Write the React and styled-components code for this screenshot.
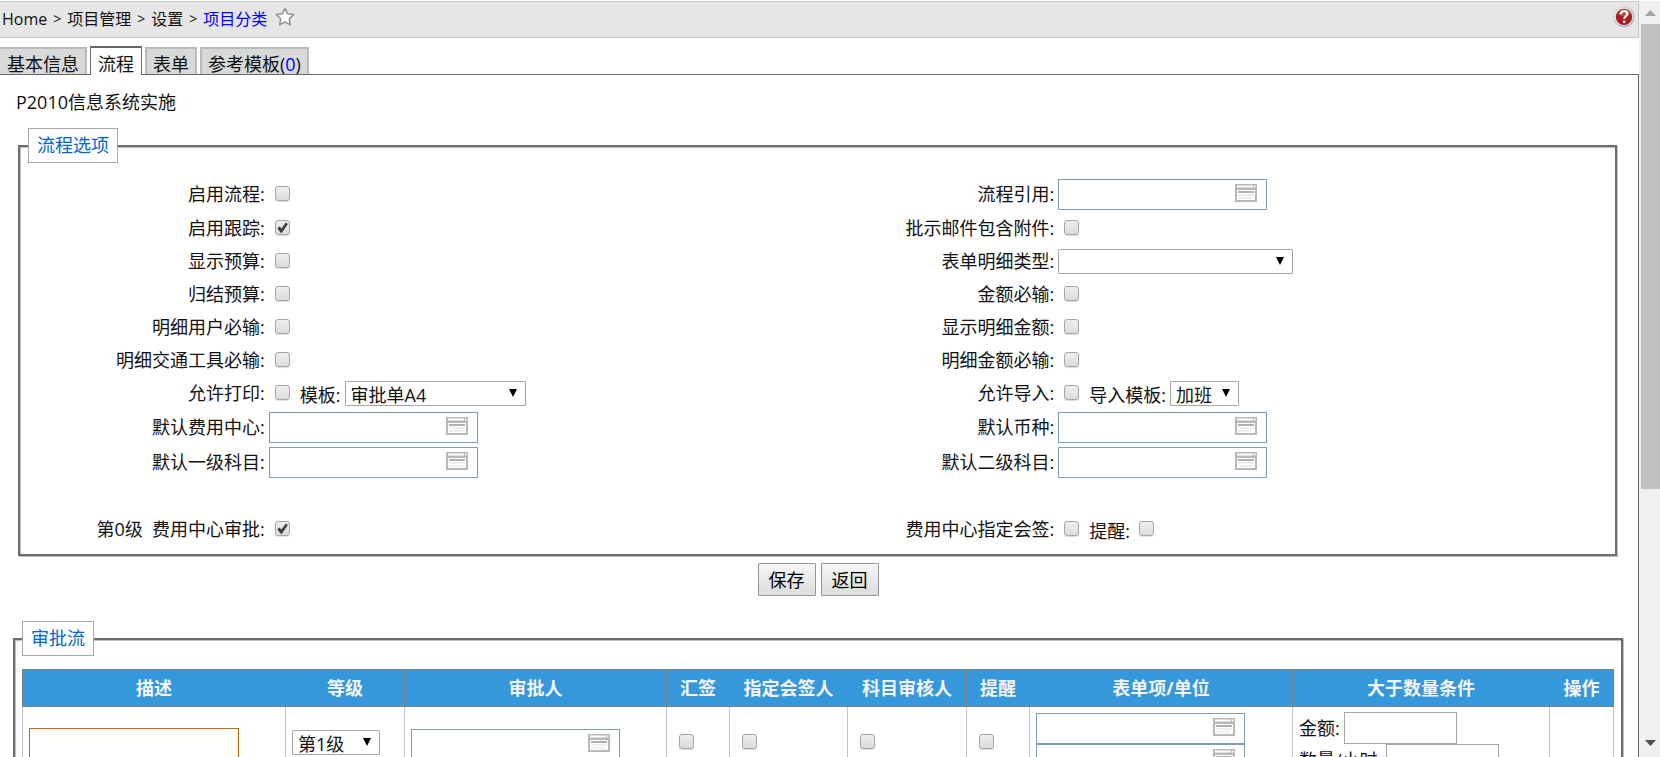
import React, { useState } from 'react'
import styled, { createGlobalStyle, css } from 'styled-components'

const GlobalStyle = createGlobalStyle`
  * {
    box-sizing: border-box;
  }

  body {
    margin: 0;
    overflow: hidden;
    background: #fff;
    color: #111;
    font: 400 18px/24px 'Open Sans', 'Noto Sans CJK SC', sans-serif;
  }

  a {
    color: inherit;
    text-decoration: none;
  }
`

const Window = styled.div`
  display: flex;
  height: 100vh;
  overflow: hidden;
`

const Page = styled.main`
  flex: 1;
  min-width: 0;
  height: 100%;
  overflow: hidden;
  padding-top: 1px;
  display: flex;
  flex-direction: column;
`

const TopBar = styled.header`
  display: flex;
  flex-shrink: 0;
  justify-content: space-between;
  align-items: flex-start;
  height: 37px;
  padding: 4px 3px 0 2px;
  border: 1px solid #c8c8c8;
  border-left: 0;
  background: #e6e6e6;
`

const Breadcrumb = styled.nav`
  display: flex;
  gap: 6px;
  padding-top: 1px;
  font-size: 16px;
`

const Crumb = styled.a`
  color: ${props => (props.$current ? '#00f' : 'inherit')};
`

const Sep = styled.span`
  font-size: 14px;
`

const IconButton = styled.button`
  display: block;
  height: 22px;
  padding: 0;
  border: 0;
  background: none;
`

const Tabs = styled.nav`
  display: flex;
  flex-shrink: 0;
  align-items: flex-end;
  gap: 3px;
  height: 36px;
`

const Tab = styled.a`
  height: 27px;
  padding: 5px 6px 0;
  border: 2px solid #b9bcbb;
  border-bottom: 0;
  background: #d8dad9;
  line-height: 20px;
  white-space: nowrap;

  &:first-child {
    padding-left: 7px;
    border-left: 0;
  }

  ${props => props.$active && css`
    height: 29px;
    margin-bottom: -1px;
    padding: 6px 7px 0;
    border: 1px solid #666;
    border-top-width: 2px;
    border-bottom: 0;
    background: #fff;
    z-index: 1;
  `}
`

const Count = styled.span`
  color: #00f;
`

const Panel = styled.section`
  flex: 1;
  min-height: 0;
  overflow: hidden;
  padding: 15px 15px 0 13px;
  border: 1px solid #666;
  border-width: 1px 1px 0 0;
`

const Title = styled.h1`
  margin: 0 3px 14px;
  font-size: 18px;
  font-weight: inherit;
`

const Group = styled.fieldset`
  min-width: 0;
  margin: ${props => (props.$inset ? '0 6px 0 5px' : '0')};
  padding: ${props => (props.$inset ? '14px 8px 8px' : '13px 7px 8px')};
  border: 2px solid #6c6c6c;
  box-shadow: 1px 1px 0 #c0c0c0, inset 1px 1px 0 #c0c0c0;
`

const Legend = styled.legend`
  height: 35px;
  padding: 4px 8px;
  border: 1px solid #a9a9a9;
  background: #fff;
  color: #06c;
`

const Options = styled.div`
  display: grid;
  grid-template-columns: 15% 35% 15% 35%;
`

const Name = styled.label`
  display: flex;
  align-items: center;
  justify-content: flex-end;
  min-height: 33px;
  padding-bottom: 1px;
  white-space: pre;
`

const Value = styled.div`
  display: flex;
  align-items: center;
  min-height: 33px;
  padding: ${props => (props.$wide ? '2px 4px' : '0 4px')};
`

const ExtraName = styled.label`
  padding-top: 3px;
`

const Gap = styled.div`
  grid-column: 1 / -1;
  height: 33px;
`

const Check = styled.input.attrs({ type: 'checkbox' })`
  appearance: none;
  display: grid;
  place-items: center;
  flex-shrink: 0;
  width: 15px;
  height: 15px;
  margin: 0 10px 2px 6px;
  border: 1px solid #a6a6a6;
  border-radius: 3px;
  background: linear-gradient(#eee, #dcdcdc);
  box-shadow: 0 1px 1px #ddd;

  &:checked::after {
    content: '';
    width: 11px;
    height: 11px;
    background: #3c3c3c;
    clip-path: polygon(5% 56%, 24% 40%, 42% 58%, 82% 4%, 100% 18%, 46% 98%, 34% 98%);
  }

  ${ExtraName} + & {
    margin-left: 9px;
  }
`

const SelectBox = styled.span`
  display: grid;
  width: ${props => props.$width}px;
  margin-left: ${props => (props.$after ? '4px' : '0')};
`

const NativeSelect = styled.select`
  appearance: none;
  grid-area: 1 / 1;
  height: 25px;
  width: 100%;
  padding: 3px 20px 0 5px;
  border: 1px solid #a6a6a6;
  border-radius: 1px;
  background: #fff;
  color: inherit;
  font: inherit;
  line-height: 20px;
`

const Arrow = styled.svg`
  grid-area: 1 / 1;
  justify-self: end;
  width: 8px;
  height: 8px;
  margin: 8px 9px 0 0;
  pointer-events: none;
`

const PickerBox = styled.span`
  display: flex;
  align-items: flex-start;
  width: 209px;
  height: 31px;
  padding: 4px 9px 0 0;
  border: 1px solid #7f9db9;
  background: #fff;
`

const PickerInput = styled.input`
  flex: 1;
  min-width: 0;
  border: 0;
  outline: 0;
  background: none;
  font: inherit;
`

const TextInput = styled.input`
  display: block;
  width: ${props => props.$width}px;
  height: 32px;
  border: 1px solid ${props => (props.$required ? '#c60' : '#a6a6a6')};
  font: inherit;
`

const Actions = styled.div`
  display: flex;
  justify-content: center;
  gap: 5px;
  padding: 7px 0 25px;
`

const Button = styled.button`
  height: 33px;
  padding: 0 10px;
  border: 1px solid #959595;
  border-radius: 1px;
  background: linear-gradient(#f6f6f6, #dcdcdc);
  color: #000;
  font: inherit;
`

const Flow = styled.table`
  width: 100%;
  table-layout: fixed;
  border-collapse: collapse;

  th {
    height: 37px;
    padding: 0;
    border: 1px solid #7f7f7f;
    background: #3498db;
    color: #f4f4f4;
    font-weight: 700;
    white-space: nowrap;
  }
`

const Cell = styled.td`
  padding: 5px 6px ${props => (props.$raised ? '9px' : '5px')};
  border: 1px solid #c4c4c4;
  vertical-align: middle;
`

const Pair = styled.div`
  display: flex;
  align-items: center;
  gap: 4px;
  white-space: nowrap;
`

const ScrollTrack = styled.aside`
  display: flex;
  flex-direction: column;
  align-items: center;
  flex-shrink: 0;
  width: 21px;
  margin-top: 1px;
  padding-left: 2px;
  background: #f0f0f0;
`

const ScrollThumb = styled.div`
  width: 100%;
  height: 61.5%;
  background: #c1c1c1;
`

const ScrollArrow = styled.svg`
  flex-shrink: 0;
  width: 11px;
  height: 6px;
  margin: ${props => (props.$down ? 'auto 0 11px' : '9px 0 8px')};
`

const StarIcon = () => (
  <svg width='22' height='20' viewBox='-2 0 22 20'>
    <path
      d='M10 1.500l2.700 5.300 5.900.8-4.300 4.100 1 6.100-5.300-2.900-5.300 2.900 1-6.100L1.400 7.600l5.900-.8z'
      fill='#fff'
      stroke='#909090'
      strokeWidth='1.500'
      strokeLinejoin='round'
    />
  </svg>
)

const HelpIcon = () => (
  <svg width='22' height='22' viewBox='0 0 22 22'>
    <circle cx='11' cy='11' r='10.500' fill='#b4b8c0' />
    <circle cx='10.500' cy='10.500' r='9.600' fill='#e4e6ea' />
    <circle cx='11' cy='11' r='8.200' fill='#a52020' />
    <path d='M4 8a7.500 7.500 0 0 1 14 0q-7 4-14 0z' fill='#c65050' opacity='.7' />
    <path
      d='M7.800 8.500c0-4.500 6.600-4.300 6.600-.8 0 2.400-3.200 2.300-3.200 5'
      fill='none'
      stroke='#fff'
      strokeWidth='2.200'
    />
    <circle cx='11.200' cy='15.800' r='1.400' fill='#fff' />
  </svg>
)

const PickIcon = () => (
  <svg width='22' height='18' viewBox='0 0 22 18'>
    <path d='M0 0h22v18H0z' fill='#b8b8b8' />
    <path d='M2 1.500h16v2H2zM19 1.500h1.500v2H19zM2 6h18v10H2z' fill='#fff' />
    <path d='M3 7h16v2H3z' fill='#b0b0b0' />
    <path d='M3 10.500h16v1H3zM3 13.500h14v1H3z' fill='#ddd' />
  </svg>
)

const Select = ({ id, label, options, width, after }) => (
  <SelectBox $width={width} $after={after}>
    <NativeSelect id={id} aria-label={label}>
      {options.map(o => <option key={o}>{o}</option>)}
    </NativeSelect>
    <Arrow viewBox='0 0 8 8'><path d='M0 0h8L4 8z' /></Arrow>
  </SelectBox>
)

const Picker = ({ id, label }) => (
  <PickerBox>
    <PickerInput id={id} aria-label={label} />
    <PickIcon />
  </PickerBox>
)

const options = [
  [{ id: 'enabled', name: '启用流程:' }, { id: 'ref', name: '流程引用:', kind: 'picker' }],
  [{ id: 'track', name: '启用跟踪:', on: true }, { id: 'attach', name: '批示邮件包含附件:' }],
  [{ id: 'budget', name: '显示预算:' }, { id: 'type', name: '表单明细类型:', kind: 'select' }],
  [{ id: 'settle', name: '归结预算:' }, { id: 'amount', name: '金额必输:' }],
  [{ id: 'user', name: '明细用户必输:' }, { id: 'showAmount', name: '显示明细金额:' }],
  [{ id: 'vehicle', name: '明细交通工具必输:' }, { id: 'itemAmount', name: '明细金额必输:' }],
  [
    { id: 'print', name: '允许打印:', extra: { name: '模板:', option: '审批单A4', width: 181 } },
    { id: 'import', name: '允许导入:', extra: { name: '导入模板:', option: '加班', width: 69 } },
  ],
  [{ id: 'center', name: '默认费用中心:', kind: 'picker' }, { id: 'currency', name: '默认币种:', kind: 'picker' }],
  [{ id: 'subject1', name: '默认一级科目:', kind: 'picker' }, { id: 'subject2', name: '默认二级科目:', kind: 'picker' }],
]

const approval = [
  { id: 'approve', name: '第0级  费用中心审批:', on: true },
  { id: 'cosign', name: '费用中心指定会签:', extra: { name: '提醒:' } },
]

const Option = ({ item }) => {
  const [on, setOn] = useState(!!item.on)
  const { id, name, kind, extra } = item

  return (
    <>
      <Name htmlFor={id}>{name}</Name>
      <Value $wide={kind === 'picker'}>
        {kind === 'picker' && <Picker id={id} />}
        {kind === 'select' && <Select id={id} options={['']} width={235} />}
        {!kind && <Check id={id} checked={on} onChange={() => setOn(!on)} />}
        {extra && <ExtraName htmlFor={`${id}-extra`}>{extra.name}</ExtraName>}
        {extra && (
          extra.option ?
            <Select id={`${id}-extra`} options={[extra.option]} width={extra.width} after />
            :
            <Check id={`${id}-extra`} />
        )}
      </Value>
    </>
  )
}

const columns = [
  { name: '描述', width: 263 },
  { name: '等级', width: 119 },
  { name: '审批人', width: 262 },
  { name: '汇签', width: 63 },
  { name: '指定会签人', width: 118 },
  { name: '科目审核人', width: 119 },
  { name: '提醒', width: 63 },
  { name: '表单项/单位', width: 263 },
  { name: '大于数量条件', width: 257 },
  { name: '操作', width: 64 },
]

const total = columns.reduce((sum, c) => sum + c.width, 0)

const FlowTable = () => (
  <Flow>
    <colgroup>
      {columns.map(c => <col key={c.name} style={{ width: `${c.width / total * 100}%` }} />)}
    </colgroup>
    <thead>
      <tr>{columns.map(c => <th key={c.name}>{c.name}</th>)}</tr>
    </thead>
    <tbody>
      <tr>
        <Cell><TextInput $width={210} $required aria-label='描述' /></Cell>
        <Cell $raised><Select label='等级' options={['第1级']} width={88} /></Cell>
        <Cell><Picker label='审批人' /></Cell>
        <Cell $raised><Check aria-label='汇签' /></Cell>
        <Cell $raised><Check aria-label='指定会签人' /></Cell>
        <Cell $raised><Check aria-label='科目审核人' /></Cell>
        <Cell $raised><Check aria-label='提醒' /></Cell>
        <Cell>
          <Picker label='表单项' />
          <Picker label='单位' />
        </Cell>
        <Cell>
          <Pair><label htmlFor='min-amount'>金额:</label><TextInput id='min-amount' $width={113} /></Pair>
          <Pair><label htmlFor='min-count'>数量/小时:</label><TextInput id='min-count' $width={113} /></Pair>
        </Cell>
        <Cell />
      </tr>
    </tbody>
  </Flow>
)

const App = () => (
  <Window>
    <GlobalStyle />
    <Page>
      <TopBar>
        <Breadcrumb>
          <Crumb href='#'>Home</Crumb>
          <Sep>&gt;</Sep>
          <Crumb href='#'>项目管理</Crumb>
          <Sep>&gt;</Sep>
          <Crumb href='#'>设置</Crumb>
          <Sep>&gt;</Sep>
          <Crumb href='#' $current>项目分类</Crumb>
          <IconButton aria-label='收藏'><StarIcon /></IconButton>
        </Breadcrumb>
        <IconButton aria-label='帮助'><HelpIcon /></IconButton>
      </TopBar>
      <Tabs>
        <Tab href='#'>基本信息</Tab>
        <Tab href='#' $active>流程</Tab>
        <Tab href='#'>表单</Tab>
        <Tab href='#'>参考模板(<Count>0</Count>)</Tab>
      </Tabs>
      <Panel>
        <Title>P2010信息系统实施</Title>
        <Group $inset>
          <Legend>流程选项</Legend>
          <Options>
            {options.map(row => row.map(item => <Option key={item.id} item={item} />))}
            <Gap />
            {approval.map(item => <Option key={item.id} item={item} />)}
          </Options>
        </Group>
        <Actions>
          <Button>保存</Button>
          <Button>返回</Button>
        </Actions>
        <Group>
          <Legend>审批流</Legend>
          <FlowTable />
        </Group>
      </Panel>
    </Page>
    <ScrollTrack>
      <ScrollArrow viewBox='0 0 11 6'><path d='M5.500 0L11 6H0z' fill='#a3a3a3' /></ScrollArrow>
      <ScrollThumb />
      <ScrollArrow $down viewBox='0 0 11 6'><path d='M0 0h11L5.500 6z' fill='#505050' /></ScrollArrow>
    </ScrollTrack>
  </Window>
)

export default App
